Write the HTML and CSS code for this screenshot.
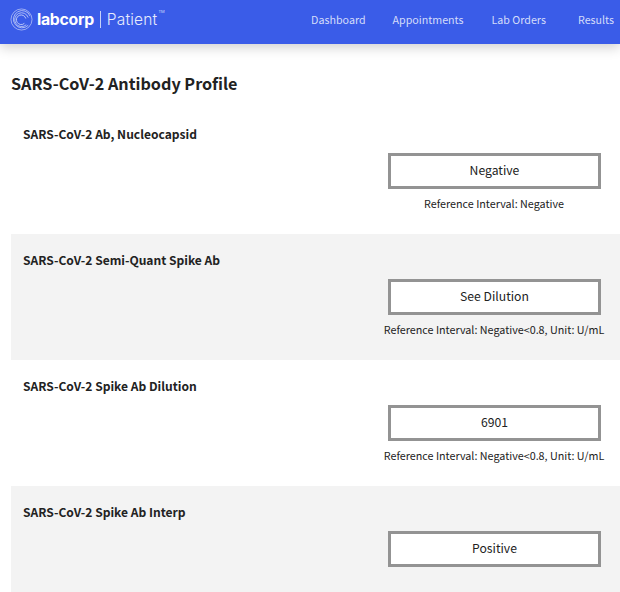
FILE: index.html
```html
<!DOCTYPE html>
<html lang="en">
<head>
<meta charset="utf-8">
<title>SARS-CoV-2 Antibody Profile</title>
<link rel="stylesheet" href="styles.css">
</head>
<body>
<header class="topbar">
  <div class="brand">
    <svg class="brand-mark" width="23" height="23" viewBox="0 0 24 24" fill="none" stroke="#dfe5fb" aria-hidden="true">
      <circle cx="12" cy="12" r="11" stroke-width="0.6"/>
      <path d="M21 8.5A9 9 0 1 0 19 18" stroke-width="0.7"/>
      <path d="M19 10A7.2 7.2 0 1 0 17 17.5" stroke-width="0.7"/>
      <path d="M16.5 11A5 5 0 1 0 15 16" stroke-width="0.8"/>
    </svg>
    <span class="brand-name">labcorp</span>
    <span class="brand-rule"></span>
    <span class="brand-sub">Patient</span>
    <sup class="brand-tm">TM</sup>
  </div>
  <nav class="nav">
    <a class="nav-link">Dashboard</a>
    <a class="nav-link">Appointments</a>
    <a class="nav-link">Lab Orders</a>
    <a class="nav-link">Results</a>
  </nav>
</header>
<main class="content">
  <h1 class="title">SARS-CoV-2 Antibody Profile</h1>
  <section class="row">
    <h2 class="row-name">SARS-CoV-2 Ab, Nucleocapsid</h2>
    <div class="result"><div class="value">Negative</div><p class="ref">Reference Interval: Negative</p></div>
  </section>
  <section class="row shaded">
    <h2 class="row-name">SARS-CoV-2 Semi-Quant Spike Ab</h2>
    <div class="result"><div class="value">See Dilution</div><p class="ref">Reference Interval: Negative&lt;0.8, Unit: U/mL</p></div>
  </section>
  <section class="row">
    <h2 class="row-name">SARS-CoV-2 Spike Ab Dilution</h2>
    <div class="result"><div class="value">6901</div><p class="ref">Reference Interval: Negative&lt;0.8, Unit: U/mL</p></div>
  </section>
  <section class="row shaded">
    <h2 class="row-name">SARS-CoV-2 Spike Ab Interp</h2>
    <div class="result"><div class="value">Positive</div></div>
  </section>
</main>
</body>
</html>
```
FILE: styles.css
```css
* { box-sizing: border-box; }
html, body { margin: 0; height: 592px; overflow: hidden; background: #fff; }
body { font-family: "Noto Sans CJK SC", "Noto Sans", sans-serif; color: #222; }
.topbar {
  height: 44px;
  background: #3a5ce8;
  display: flex;
  align-items: center;
  justify-content: space-between;
  padding: 0 6px 5px 10px;
  box-shadow: 0 3px 12px rgba(0, 0, 0, 0.2);
  position: relative;
}
.brand { display: flex; align-items: center; color: #fff; height: 100%; }
.brand-mark { flex: none; margin-right: 4px; }
.brand-name { font-family: Inter, sans-serif; font-weight: 700; font-size: 15.8px; letter-spacing: -0.3px; }
.brand-rule { width: 1px; height: 17px; background: #c6d1f8; margin: 0 6px 0 6px; }
.brand-sub { font-family: Inter, sans-serif; font-weight: 300; font-size: 15.5px; color: #e6eafc; letter-spacing: 0.2px; }
.brand-tm { font-family: Inter, sans-serif; font-size: 4px; color: #d5dcf9; align-self: flex-start; margin: 9px 0 0 1px; }
.nav { display: flex; }
.nav-link { font-size: 10.7px; color: #d5dcfa; margin-left: 27px; }
.nav-link:nth-child(3) { margin-left: 28px; }
.nav-link:last-child { margin-left: 32px; }
.content { padding: 0 0 0 11px; }
.title { margin: 0; font-size: 16.2px; font-weight: 700; height: 64px; padding-top: 27px; line-height: 24px; color: #222; }
.row { height: 126px; padding: 17px 19px 0 12px; display: flex; flex-direction: column; }
.shaded { background: #f3f3f3; }
.row-name { margin: 0; font-size: 12.05px; font-weight: 700; line-height: 18px; height: 28px; }
.result { align-self: flex-end; width: 213px; display: flex; flex-direction: column; align-items: center; }
.value {
  width: 213px;
  height: 36px;
  border: 3px solid #939393;
  background: #fff;
  display: flex;
  align-items: center;
  justify-content: center;
  font-size: 12.2px;
  padding-bottom: 2px;
}
.ref { margin: 6px -30px 0 -31px; font-size: 10.75px; line-height: 18px; white-space: nowrap; }
```
